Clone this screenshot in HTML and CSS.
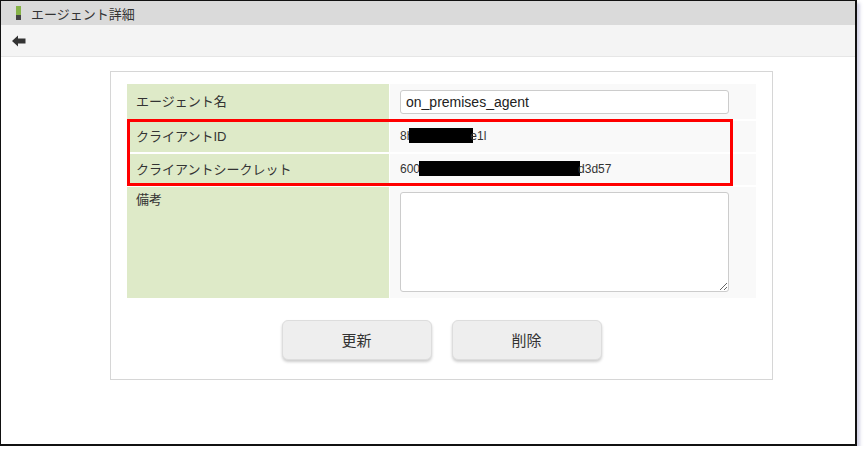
FILE: index.html
```html
<!DOCTYPE html>
<html lang="ja">
<head>
    <meta charset="UTF-8">
    <title>エージェント詳細</title>
    <link rel="stylesheet" href="styles.css">
</head>
<body>
    <div class="window">
        <div class="title-bar">
            <span class="title-mark"></span>
            <span class="title-text">エージェント詳細</span>
        </div>
        <div class="tool-bar">
            <svg class="back-icon" viewBox="0 0 14 12" xmlns="http://www.w3.org/2000/svg">
                <path d="M0 6L6 0.5L6 3.4L13.5 3.4L13.5 8.6L6 8.6L6 11.5Z" fill="#333"/>
            </svg>
        </div>

        <div class="content">
            <div class="panel">
                <div class="form-table">
                    <div class="cell label">エージェント名</div>
                    <div class="cell value">
                        <input class="text-input" type="text" value="on_premises_agent">
                    </div>

                    <div class="cell label">クライアントID</div>
                    <div class="cell value plain">8h<span class="mask mask-id"></span>e1l</div>

                    <div class="cell label">クライアントシークレット</div>
                    <div class="cell value plain">600<span class="mask mask-secret"></span>d3d57</div>

                    <div class="cell label label-top">備考</div>
                    <div class="cell value value-top">
                        <textarea class="note-input"></textarea>
                    </div>

                    <!-- 注目枠 -->
                    <div class="highlight"></div>
                </div>

                <div class="actions">
                    <button class="btn">更新</button>
                    <button class="btn">削除</button>
                </div>
            </div>
        </div>
    </div>
</body>
</html>
```

FILE: styles.css
```css
:root {
    --text-color: #333333;
    --label-bg: #deeac8;
    --value-bg: #f9f9f9;
    --line-color: #d6d6d6;
}

* {
    margin: 0;
    padding: 0;
    box-sizing: border-box;
}

body {
    background: #ffffff;
    font-family: 'Liberation Sans', 'Noto Sans CJK JP', sans-serif;
    color: var(--text-color);
}

.window {
    width: 857px;
    height: 446px;
    border: 1px solid #111111;
    border-width: 1px 2px 2px 1px;
    box-shadow: 3px 3px 3px rgba(160, 160, 200, 0.45);
    display: flex;
    flex-direction: column;
    background: #ffffff;
}

.title-bar {
    height: 24px;
    background: #dadada;
    display: flex;
    align-items: center;
    padding-left: 15px;
}

.title-mark {
    width: 5px;
    height: 14px;
    background: linear-gradient(to bottom, #86b347 0, #86b347 65%, #444 65%, #444 100%);
    margin-right: 10px;
}

.title-text {
    font-size: 13px;
    color: #333;
}

.tool-bar {
    height: 32px;
    background: #f4f4f4;
    border-bottom: 1px solid #e6e6e6;
    display: flex;
    align-items: center;
    padding-left: 11px;
}

.back-icon {
    width: 14px;
    height: 12px;
}

.content {
    padding: 14px 0 0 109px;
}

.panel {
    width: 663px;
    border: 1px solid var(--line-color);
    padding: 12px 16px 19px 16px;
}

.form-table {
    position: relative;
    display: grid;
    grid-template-columns: 262px 1fr;
    grid-template-rows: 35px 31px 31px 111px;
    gap: 2px 1px;
}

.cell {
    font-size: 13px;
    display: flex;
    align-items: center;
}

.label {
    background: var(--label-bg);
    padding: 0 9px 3px 9px;
}

.label-top {
    align-items: flex-start;
    padding-top: 2px;
}

.value {
    background: var(--value-bg);
    padding: 0 27px 0 10px;
}

.value-top {
    align-items: flex-start;
    padding-top: 5px;
}

.plain {
    font-size: 12px;
    padding-bottom: 2px;
}

.text-input {
    width: 329px;
    height: 24px;
    border: 1px solid #cccccc;
    border-radius: 3px;
    padding: 0 5px;
    font-family: 'Liberation Sans', sans-serif;
    font-size: 14px;
    color: #222;
    background: #ffffff;
}

.note-input {
    width: 329px;
    height: 100px;
    border: 1px solid #cccccc;
    border-radius: 3px;
    background: #ffffff;
}

.mask {
    display: inline-block;
    height: 15px;
    background: #000000;
}

.mask-id {
    width: 64px;
    margin-left: -4px;
    margin-right: -3px;
}

.mask-secret {
    width: 161px;
    margin-left: -1px;
    margin-right: -2px;
}

.highlight {
    position: absolute;
    left: 0;
    top: 35px;
    width: 606px;
    height: 67px;
    border: 3px solid #ff0000;
}

.actions {
    display: flex;
    justify-content: center;
    gap: 20px;
    margin-top: 22px;
}

.btn {
    width: 150px;
    height: 40px;
    background: #eeeeee;
    border: 1px solid #dddddd;
    border-radius: 6px;
    box-shadow: 0 2px 3px rgba(0, 0, 0, 0.2);
    font-family: 'Noto Sans CJK JP', sans-serif;
    font-size: 15px;
    color: #333;
    padding-bottom: 2px;
}
```
